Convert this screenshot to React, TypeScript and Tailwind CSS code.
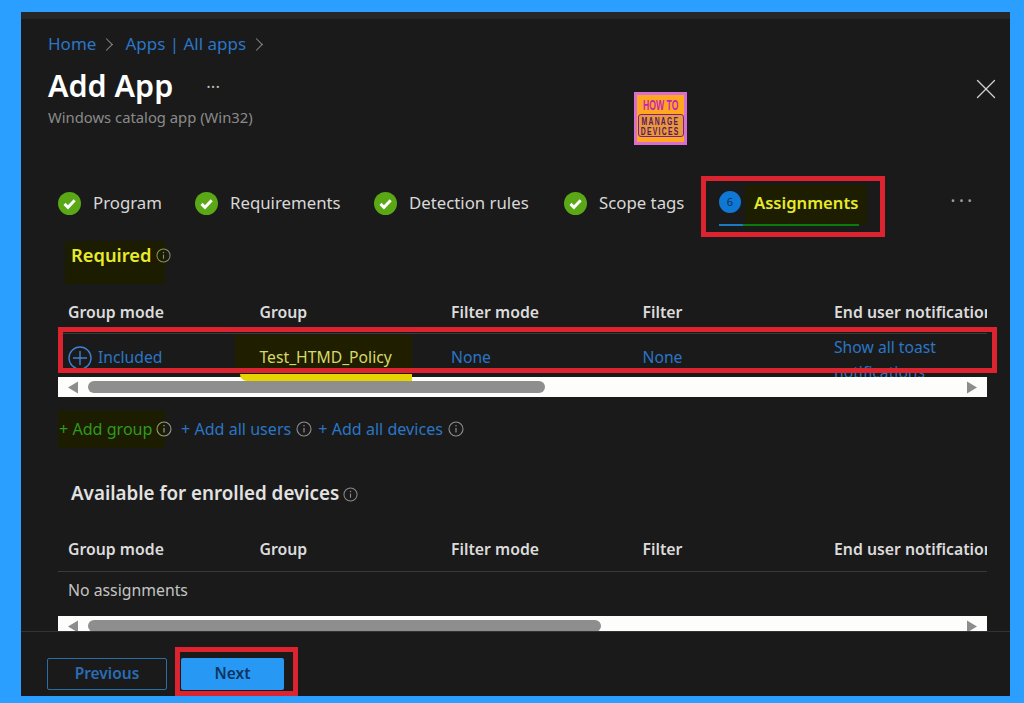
import { X } from "lucide-react";

const columns = ["Group mode", "Group", "Filter mode", "Filter", "End user notification"];
const steps = [
  { label: "Program", width: "w-[137px]" },
  { label: "Requirements", width: "w-[179px]" },
  { label: "Detection rules", width: "w-[190px]" },
  { label: "Scope tags", width: "w-[140px]" },
];

function InfoIcon({ className }: { className?: string }) {
  return (
    <svg viewBox="0 0 16 16" className={`shrink-0 ${className}`} fill="none" stroke="currentColor" aria-hidden>
      <circle cx="8" cy="8" r="7" strokeWidth="1.1" />
      <path d="M8 7v4.5" strokeWidth="1.2" />
      <circle cx="8" cy="4.8" r="0.8" fill="currentColor" stroke="none" />
    </svg>
  );
}

function CheckBadge() {
  return (
    <svg viewBox="0 0 24 24" className="size-[23px] shrink-0" aria-hidden>
      <circle cx="12" cy="12" r="12" fill="#5aa815" />
      <path d="M6.8 12.4l3.6 3.6 7-7.4" fill="none" stroke="#fff" strokeWidth="3" />
    </svg>
  );
}

function Arrow({ right }: { right?: boolean }) {
  return (
    <svg viewBox="0 0 10 12" className="h-[13px] w-[10px] shrink-0" aria-hidden>
      <path d={right ? "M0 0l10 6-10 6z" : "M10 0L0 6l10 6z"} fill="#8c8c8c" />
    </svg>
  );
}

function ScrollBar({ thumb, className }: { thumb: string; className: string }) {
  return (
    <div className={`flex items-start bg-[#fdfdfb] px-[10px] pt-[4px] ${className}`}>
      <Arrow />
      <div className={`ml-[10px] h-[12px] rounded-full bg-[#8e8e8e] ${thumb}`} />
      <div className="flex-1" />
      <Arrow right />
    </div>
  );
}

function HeaderRow() {
  return (
    <div className="grid grid-cols-[191.5px_191.5px_191.5px_191.5px_153px] pl-[10px] text-[15.8px] font-semibold leading-[24px] text-[#dcdcdc]">
      {columns.map((column) => (
        <div key={column} className="overflow-hidden whitespace-nowrap">
          {column}
        </div>
      ))}
    </div>
  );
}

function Logo() {
  return (
    <div className="flex size-[53px] flex-col items-center border-[3px] border-[#d66fd0] bg-[#ffa71f] font-['Liberation_Sans',sans-serif] font-bold">
      <div className="mt-[3px] scale-x-[.62] whitespace-nowrap text-[14px] leading-[14px] text-[#c81fb8]">HOW TO</div>
      <div className="mt-[2px] flex h-[23px] w-[46px] flex-col items-center justify-center rounded-[3px] border border-[#7a1f88] bg-[#e89a3a] text-[11px] leading-[10px] text-[#5c1466]">
        <span className="scale-x-[.62] whitespace-nowrap tracking-[2px]">MANAGE</span>
        <span className="scale-x-[.62] whitespace-nowrap tracking-[2px]">DEVICES</span>
      </div>
    </div>
  );
}

export default function App() {
  return (
    <div className="h-[703px] w-[1024px] overflow-hidden bg-[#2a9fff] pl-[21px] pt-[12px] font-['Noto_Sans',sans-serif]">
      <div className="flex h-[684px] w-[989px] flex-col border-t-[7px] border-[#262626] bg-[#1a1a1a]">
        <div className="relative min-h-0 flex-1 overflow-hidden">
          <div className="mt-[13px] flex items-center pl-[27px] text-[17px] leading-[24px] text-[#2a76c6]">
            Home
            <span className="ml-[6px] mr-[14px] size-[9px] rotate-45 border-r border-t border-[#8a8a8a]" />
            <span>Apps | All apps</span>
            <span className="ml-[6px] size-[9px] rotate-45 border-r border-t border-[#8a8a8a]" />
          </div>

          <div className="mt-[10px] flex items-center pl-[27px]">
            <h1 className="text-[30.5px] font-semibold leading-[38px] text-white">Add App</h1>
            <span className="ml-[33px] mt-[2px] text-[17px] leading-none text-[#bbbbbb]">···</span>
          </div>
          <div className="mt-[3px] pl-[27px] text-[14.8px] leading-[20px] text-[#8a8a8a]">Windows catalog app (Win32)</div>

          <div className="absolute left-[613px] top-[73px]">
            <Logo />
          </div>
          <X className="absolute left-[948px] top-[53px] size-[34px] text-[#d0d0d0]" strokeWidth={0.9} aria-hidden />

          <div className="mt-[64px] flex items-center pl-[37px] text-[16.8px] leading-[24px] text-[#d8d8d8]">
            {steps.map((step) => (
              <div key={step.label} className={`flex items-center gap-[12px] ${step.width}`}>
                <CheckBadge />
                {step.label}
              </div>
            ))}
            <div className="relative ml-[15px] flex items-center gap-[13px] font-semibold text-[#e6ea2a]">
              <div className="absolute left-[26px] -top-[6px] h-[40px] w-[122px] bg-[#1d1d00]" />
              <span className="relative -mt-[3px] flex size-[22px] items-center justify-center rounded-full bg-[#0f78d4] text-[11px] font-normal text-[#0b2c55]">6</span>
              <span className="relative text-[16.6px]">Assignments</span>
              <div className="absolute -bottom-[11px] left-0 h-[2px] w-[140px] bg-[#0b7a0b]">
                <div className="h-full w-[24px] bg-[#1a78c4]" />
              </div>
              <div className="absolute -left-[18px] -top-[15px] h-[61px] w-[184px] border-[5px] border-[#dc2330]" />
            </div>
            <span className="ml-[92px] -mt-[4px] text-[20px] leading-none tracking-[3px] text-[#a0a0a0]">···</span>
          </div>

          <div className="ml-[44px] mt-[26px] flex h-[43px] w-[100px] items-start bg-[#1c1c00] pl-[6px]">
            <span className="whitespace-nowrap text-[18.3px] font-semibold leading-[28px] text-[#e8ea2c]">Required</span>
            <InfoIcon className="ml-[5px] mt-[7px] size-[15px] text-[#8f8f5c]" />
          </div>

          <div className="ml-[37px] w-[929px]">
            <div className="mt-[16px]">
              <HeaderRow />
            </div>
            <div className="relative mt-[9px] h-[44px] border-t border-[#3a3a3a] pl-[10px] text-[15.7px] text-[#2a76c6]">
              <div className="absolute left-[177px] top-[1px] h-[44px] w-[177px] rounded-b-[12px] bg-[#1f1f00]" />
              <div className="relative grid h-full grid-cols-[191.5px_191.5px_191.5px_191.5px_153px] overflow-hidden">
                <div className="flex items-center gap-[6px] pb-[4px]">
                  <svg viewBox="0 0 24 24" className="size-[24px]" fill="none" stroke="#3f7fd0" strokeWidth="1.4" aria-hidden>
                    <circle cx="12" cy="12" r="11" />
                    <path d="M12 5v14M5 12h14" />
                  </svg>
                  Included
                </div>
                <div className="flex items-center pb-[4px] text-[#d8d86a]">Test_HTMD_Policy</div>
                <div className="flex items-center pb-[4px]">None</div>
                <div className="flex items-center pb-[4px]">None</div>
                <div className="pt-[1px] leading-[25px]">
                  Show all toast
                  <br />
                  notifications
                </div>
              </div>
            </div>
            <ScrollBar thumb="w-[457px]" className="relative h-[20px]" />

            <div className="relative mt-[13px] flex h-[38px] items-center text-[16.1px] text-[#2a76c6]">
              <div className="flex h-full w-[107px] items-center gap-[4px] bg-[#1c1c00] pl-[1px] text-[#2f9a1f]">
                <span className="whitespace-nowrap">+ Add group</span>
                <InfoIcon className="size-[16px] text-[#9a9a7c]" />
              </div>
              <span className="ml-[16px] whitespace-nowrap">+ Add all users</span>
              <InfoIcon className="ml-[5px] size-[16px] text-[#8f8f8f]" />
              <span className="ml-[6px] whitespace-nowrap">+ Add all devices</span>
              <InfoIcon className="ml-[5px] size-[16px] text-[#8f8f8f]" />
            </div>

            <div className="ml-[13px] mt-[32px] flex items-center">
              <span className="text-[18.8px] font-semibold leading-[26px] text-[#e2e2e2]">Available for enrolled devices</span>
              <InfoIcon className="ml-[4px] mt-[2px] size-[15px] text-[#8a8a8a]" />
            </div>

            <div className="mt-[31px]">
              <HeaderRow />
            </div>
            <div className="mt-[10px] h-[45px] border-t border-[#3a3a3a] pl-[10px] pt-[6px] text-[15.8px] leading-[24px] text-[#c4c4c4]">No assignments</div>
            <ScrollBar thumb="w-[513px]" className="h-[20px]" />
          </div>

          <div className="pointer-events-none absolute left-[219px] top-[355px] h-[7px] w-[172px] rounded-bl-[12px] bg-[#e6d400]" />
          <div className="pointer-events-none absolute left-[37px] top-[308px] h-[46px] w-[939px] border-[5px] border-[#dc2330]" />
        </div>

        <div className="flex h-[65px] shrink-0 items-start border-t border-[#333333] pl-[26px] pt-[26px]">
          <button type="button" className="h-[32px] w-[120px] rounded-[2px] border border-[#2a6ea8] text-[15.5px] font-semibold text-[#2a6cb4]">Previous</button>
          <div className="relative ml-[14px]">
            <button type="button" className="h-[32px] w-[103px] rounded-[2px] bg-[#2898f5] text-[15.5px] font-semibold text-[#0d3560]">Next</button>
            <div className="absolute -left-[6px] -top-[11px] h-[49px] w-[123px] border-[5px] border-[#dc2330]" />
          </div>
        </div>
      </div>
    </div>
  );
}
